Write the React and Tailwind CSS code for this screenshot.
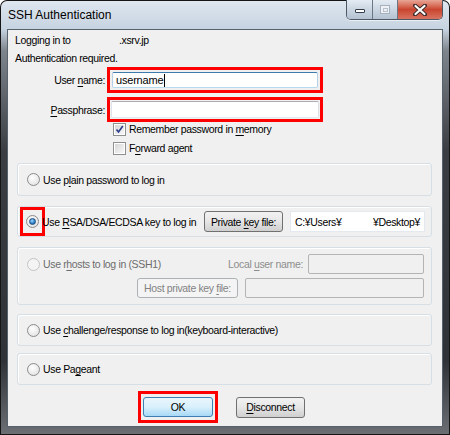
import React from 'react';

const font = { fontFamily: '"Liberation Sans", Arial, sans-serif' };

const U = ({ children }) => <span className="underline underline-offset-[2px]">{children}</span>;

const Radio = ({ checked = false, disabled = false }) => (
  <span
    className={`relative flex h-[13px] w-[13px] shrink-0 items-center justify-center rounded-full border ${
      disabled ? 'border-[#c4c4c4] bg-[#f4f4f4]' : 'border-[#8b8b8b] bg-[radial-gradient(circle_at_40%_35%,#ffffff,#dcdcdc)]'
    }`}
  >
    {checked && (
      <span className="h-[7px] w-[7px] rounded-full border border-[#1c4f82] bg-[radial-gradient(circle_at_40%_35%,#9fd6ff,#2d7fc4_60%,#1a4f85)]" />
    )}
  </span>
);

const Check = ({ checked = false }) => (
  <span className="flex h-[13px] w-[13px] shrink-0 items-center justify-center border border-[#8e8f8f] bg-white">
    <span className="flex h-[9px] w-[9px] items-center justify-center bg-gradient-to-br from-[#d7d7d7] to-[#f7f7f7]">
      {checked && (
        <svg width="9" height="9" viewBox="0 0 9 9">
          <path d="M1.5 4.5 L3.5 7 L7.8 1" fill="none" stroke="#2a3a8c" strokeWidth="1.6" />
        </svg>
      )}
    </span>
  </span>
);

const Button = ({ children, def = false, disabled = false, className = '' }) => (
  <div
    className={`flex items-center justify-center whitespace-nowrap rounded-[3px] border ${
      def
        ? 'border-[#3c7fb1] bg-gradient-to-b from-[#eaf6fd] via-[#d9f0fc] to-[#a7d9f5] text-black'
        : disabled
        ? 'border-[#adb2b5] bg-[#f4f4f4] text-[#838383]'
        : 'border-[#707070] bg-gradient-to-b from-[#f2f2f2] via-[#e6e6e6] to-[#cfcfcf] text-black'
    } ${className}`}
  >
    <span>{children}</span>
  </div>
);

const Group = ({ children, className = '' }) => (
  <div className={`ml-[9px] mr-[10px] rounded-[3px] border border-[#d5dfe5] shadow-[inset_1px_1px_0_#ffffff] ${className}`}>
    {children}
  </div>
);

export default function App() {
  return (
    <div className="h-[435px] w-[450px] overflow-hidden rounded-t-[7px] bg-[#151515] p-[1px]" style={font}>
      <div className="flex h-full w-full flex-col rounded-t-[6px] bg-[linear-gradient(to_bottom,#dfe7f0_0px,#c6d3e0_28px,#7d848c_50px,#3a3e42_150px,#2f3236_360px,#6d7175_435px)] px-[6px] pb-[7px]">
        <div className="flex h-[28px] shrink-0 items-start justify-between">
          <div className="pl-[1px] pt-[5px] text-[12px] text-black">SSH Authentication</div>
          <div className="-mt-[1px] flex h-[20px] overflow-hidden rounded-b-[5px] border border-t-0 border-[#4d5866] shadow-[0_1px_0_#ffffff99]">
            <div className="flex w-[26px] items-center justify-center border-r border-[#6a7786] bg-gradient-to-b from-[#e4ebf3] via-[#cbd6e2] to-[#b4c2d1]">
              <span className="mt-[3px] h-[4px] w-[10px] rounded-[1px] border border-[#333c48] bg-white" />
            </div>
            <div className="flex w-[25px] items-center justify-center border-r border-[#6a7786] bg-gradient-to-b from-[#e4ebf3] via-[#cbd6e2] to-[#b4c2d1]">
              <span className="flex h-[9px] w-[10px] items-center justify-center border border-[#a6b1be] bg-[#eef2f6]">
                <span className="h-[4px] w-[5px] border border-[#b7c1cc]" />
              </span>
            </div>
            <div className="flex w-[44px] items-center justify-center bg-gradient-to-b from-[#e8a596] via-[#c9452f] to-[#d87260]">
              <svg width="14" height="12" viewBox="0 0 14 12">
                <path d="M2 1.5 L12 10.5 M12 1.5 L2 10.5" stroke="#3b2a2a" strokeWidth="4" strokeLinecap="round" />
                <path d="M2.5 2 L11.5 10 M11.5 2 L2.5 10" stroke="#ffffff" strokeWidth="2.2" strokeLinecap="round" />
              </svg>
            </div>
          </div>
        </div>

        <div className="flex flex-1 flex-col whitespace-nowrap border border-[#58626d] bg-[#f0f0f0] text-[10.5px] leading-[14px] tracking-[-0.35px] text-black">
          <div className="mt-[3px] flex h-[14px] items-center pl-[7px]">
            <span className="w-[104px]">Logging in to</span>
            <span>.xsrv.jp</span>
          </div>
          <div className="mt-[4px] flex h-[14px] items-center pl-[7px]">Authentication required.</div>

          <div className="mt-[2px] flex items-center">
            <div className="w-[97px] text-right">User <U>n</U>ame:</div>
            <div className="ml-[2px] h-[26px] w-[216px] border-[3px] border-[#ff0000] p-[2px]">
              <div className="flex h-full items-center rounded-[2px] border border-[#3d7bad] border-b-[#b7d9ed] border-l-[#b5cfe7] border-r-[#b5cfe7] bg-white pl-[3px] text-[11px] tracking-[-0.2px]">
                username<span className="ml-[1px] h-[13px] w-[1px] bg-black" />
              </div>
            </div>
          </div>
          <div className="mt-[4px] flex items-center">
            <div className="w-[97px] text-right"><U>P</U>assphrase:</div>
            <div className="ml-[2px] h-[25px] w-[216px] border-[3px] border-[#ff0000] p-[1px]">
              <div className="h-full rounded-[2px] border border-[#abadb3] border-b-[#e3e9ef] border-l-[#e2e3ea] border-r-[#dbdfe6] bg-white" />
            </div>
          </div>

          <div className="flex h-[14px] items-center gap-[3px] pl-[105px]">
            <Check checked />
            <span>Remember password in <U>m</U>emory</span>
          </div>
          <div className="mt-[5px] flex h-[14px] items-center gap-[3px] pl-[105px]">
            <Check />
            <span>F<U>o</U>rward agent</span>
          </div>

          <Group className="mt-[8px] flex h-[33px] items-center pl-[9px]">
            <Radio />
            <span className="ml-[3px]">Use p<U>l</U>ain password to log in</span>
          </Group>

          <Group className="mt-[10px] flex h-[31px] items-center pl-[2px] pr-[6px]">
            <span className="flex h-[29px] w-[25px] items-center justify-center border-[3px] border-[#ff0000]">
              <Radio checked />
            </span>
            <span className="-ml-[3px]">Use <U>R</U>SA/DSA/ECDSA key to log in</span>
            <Button className="ml-auto h-[21px] w-[79px]">Private <U>k</U>ey file:</Button>
            <div className="ml-[7px] flex h-[21px] w-[135px] items-center justify-between border border-[#e3e9ef] bg-white px-[4px]">
              <span>C:¥Users¥</span>
              <span>¥Desktop¥</span>
            </div>
          </Group>

          <Group className="mt-[10px] flex h-[58px] flex-col justify-center gap-[4px] pl-[9px] pr-[7px]">
            <div className="flex items-center">
              <Radio disabled />
              <span className="ml-[3px] text-[#6d6d6d]">Use r<U>h</U>osts to log in (SSH1)</span>
              <span className="ml-auto text-[#8d8d8d]">Local <U>u</U>ser name:</span>
              <div className="ml-[5px] h-[20px] w-[116px] rounded-[2px] border border-[#b4b4b4] bg-[#f0f0f0]" />
            </div>
            <div className="flex items-center justify-end">
              <Button disabled className="h-[20px] w-[101px]">Host private key <U>f</U>ile:</Button>
              <div className="ml-[7px] h-[20px] w-[179px] rounded-[2px] border border-[#b4b4b4] bg-[#f0f0f0]" />
            </div>
          </Group>

          <Group className="mt-[9px] flex h-[32px] items-center pl-[9px]">
            <Radio />
            <span className="ml-[3px]">Use <U>c</U>hallenge/response to log in(keyboard-interactive)</span>
          </Group>

          <Group className="mt-[7px] flex h-[32px] items-center pl-[9px]">
            <Radio />
            <span className="ml-[3px]">Use Pa<U>g</U>eant</span>
          </Group>

          <div className="mt-[6px] flex items-center pl-[130px]">
            <div className="flex h-[32px] w-[80px] items-center justify-center border-[3px] border-[#ff0000]">
              <Button def className="h-[20px] w-[70px]">OK</Button>
            </div>
            <Button className="ml-[18px] h-[21px] w-[69px]"><U>D</U>isconnect</Button>
          </div>
        </div>
      </div>
    </div>
  );
}
